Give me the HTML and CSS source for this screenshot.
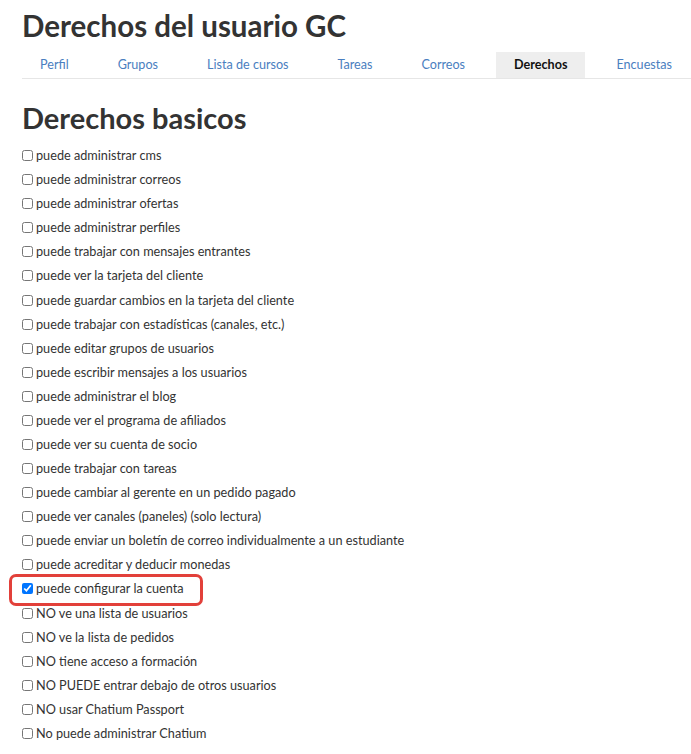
FILE: index.html
```html
<!DOCTYPE html>
<html lang="es">
<head>
    <meta charset="UTF-8">
    <meta name="viewport" content="width=device-width, initial-scale=1.0">
    <title>Derechos del usuario GC</title>
    <link rel="stylesheet" href="styles.css">
</head>
<body>
    <div class="page">
        <h1 class="page-title">Derechos del usuario GC</h1>
        <ul class="tabs">
            <li class="tab"><a href="#">Perfil</a></li>
            <li class="tab"><a href="#">Grupos</a></li>
            <li class="tab"><a href="#">Lista de cursos</a></li>
            <li class="tab"><a href="#">Tareas</a></li>
            <li class="tab"><a href="#">Correos</a></li>
            <li class="tab active"><a href="#">Derechos</a></li>
            <li class="tab"><a href="#">Encuestas</a></li>
        </ul>

        <h2 class="section-title">Derechos basicos</h2>
        <div class="rights">
            <label class="right"><input type="checkbox"> puede administrar cms</label>
            <label class="right"><input type="checkbox"> puede administrar correos</label>
            <label class="right"><input type="checkbox"> puede administrar ofertas</label>
            <label class="right"><input type="checkbox"> puede administrar perfiles</label>
            <label class="right"><input type="checkbox"> puede trabajar con mensajes entrantes</label>
            <label class="right"><input type="checkbox"> puede ver la tarjeta del cliente</label>
            <label class="right"><input type="checkbox"> puede guardar cambios en la tarjeta del cliente</label>
            <label class="right"><input type="checkbox"> puede trabajar con estadísticas (canales, etc.)</label>
            <label class="right"><input type="checkbox"> puede editar grupos de usuarios</label>
            <label class="right"><input type="checkbox"> puede escribir mensajes a los usuarios</label>
            <label class="right"><input type="checkbox"> puede administrar el blog</label>
            <label class="right"><input type="checkbox"> puede ver el programa de afiliados</label>
            <label class="right"><input type="checkbox"> puede ver su cuenta de socio</label>
            <label class="right"><input type="checkbox"> puede trabajar con tareas</label>
            <label class="right"><input type="checkbox"> puede cambiar al gerente en un pedido pagado</label>
            <label class="right"><input type="checkbox"> puede ver canales (paneles) (solo lectura)</label>
            <label class="right"><input type="checkbox"> puede enviar un boletín de correo individualmente a un estudiante</label>
            <label class="right"><input type="checkbox"> puede acreditar y deducir monedas</label>
            <label class="right highlight"><input type="checkbox" checked> puede configurar la cuenta</label>
            <label class="right"><input type="checkbox"> NO ve una lista de usuarios</label>
            <label class="right"><input type="checkbox"> NO ve la lista de pedidos</label>
            <label class="right"><input type="checkbox"> NO tiene acceso a formación</label>
            <label class="right"><input type="checkbox"> NO PUEDE entrar debajo de otros usuarios</label>
            <label class="right"><input type="checkbox"> NO usar Chatium Passport</label>
            <label class="right"><input type="checkbox"> No puede administrar Chatium</label>
        </div>
    </div>
</body>
</html>
```

FILE: styles.css
```css
body {
    margin: 0;
    padding: 0;
    background: #fff;
    font-family: Lato, "Open Sans", Arial, sans-serif;
    color: #333;
    overflow: hidden;
}
.page {
    padding: 6px 0 0 22px;
}
.page-title {
    margin: 0;
    font-size: 29.5px;
    font-weight: bold;
    line-height: 40px;
    color: #333;
}
.tabs {
    list-style: none;
    margin: 6px 0 0 0;
    padding: 0;
    display: flex;
    gap: 13px;
    border-bottom: 1px solid #e6e6e6;
    white-space: nowrap;
}
.tab a {
    display: block;
    padding: 0 18px;
    height: 26px;
    line-height: 26px;
    font-size: 12.6px;
    color: #4a7ec0;
    text-decoration: none;
}
.tab.active a {
    background-color: #eee;
    color: #111;
    font-weight: bold;
}
.section-title {
    margin: 21px 0 0 0;
    font-size: 29px;
    font-weight: bold;
    line-height: 36px;
    color: #333;
}
.rights {
    display: flex;
    flex-direction: column;
    align-items: flex-start;
    margin-top: 7px;
}
.right {
    display: flex;
    align-items: center;
    gap: 3px;
    height: 24.08px;
    font-size: 12.7px;
    color: #333;
    position: relative;
}
.right input {
    margin: 1px 0 0 0;
    width: 11px;
    height: 11px;
}
/* red frame drawn over the selected row */
.highlight::after {
    content: '';
    position: absolute;
    left: -13px;
    right: -19px;
    top: -2px;
    bottom: -6px;
    border: 3px solid #e2403a;
    border-radius: 7px;
}
```
